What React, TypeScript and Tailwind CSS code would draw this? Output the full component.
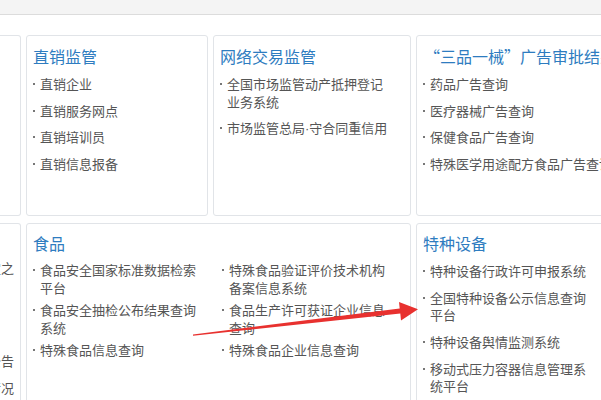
import React from "react";

const Bullet = () => (
    <span className="w-[7px] shrink-0 pt-[8px] flex">
        <span className="block w-[2px] h-[2px] bg-[#777]" />
    </span>
);

const List = ({ items, gap, lh, nowrap }: { items: React.ReactNode[]; gap: string; lh: string; nowrap?: boolean }) => (
    <ul className={`flex flex-col ${gap}`}>
        {items.map((t, i) => (
            <li key={i} className={`flex text-[13px] text-[#555] ${lh}`}>
                <Bullet />
                <span className={nowrap ? "whitespace-nowrap" : "w-[165px]"}>{t}</span>
            </li>
        ))}
    </ul>
);

const Card = ({ title, children, className = "" }: { title?: string; children?: React.ReactNode; className?: string }) => (
    <div className={`bg-white border border-[#e1e4e8] rounded-[3px] pl-[6px] ${className}`}>
        {title && <h3 className="text-[16px] leading-[22px] text-[#2e7cc0] whitespace-nowrap">{title}</h3>}
        {children}
    </div>
);

export default function App() {
    return (
        <div
            className="relative w-[601px] h-[400px] overflow-hidden bg-white"
            style={{ fontFamily: '"Noto Sans CJK SC", "Noto Sans", sans-serif' }}
        >
            {/* top strip */}
            <div className="h-[15px] bg-[#f4f4f4] border-b border-[#dcdcdc]" />

            <div className="mt-[20px] grid grid-cols-[21px_182px_198px_200px] grid-rows-[181px_200px] gap-x-[5px] gap-y-[7px]">
                {/* row 1 */}
                <div className="border-y border-r border-[#e1e4e8] rounded-r-[3px]" />
                <Card title="直销监管" className="pt-[9px]">
                    <div className="mt-[8px]">
                        <List gap="gap-[8.7px]" lh="leading-[18px]" items={["直销企业", "直销服务网点", "直销培训员", "直销信息报备"]} />
                    </div>
                </Card>
                <Card title="网络交易监管" className="pt-[9px]">
                    <div className="mt-[8px]">
                        <List
                            gap="gap-[8px]"
                            lh="leading-[18px]"
                            items={[
                                "全国市场监管动产抵押登记业务系统",
                                <span className="whitespace-nowrap">
                                    市场监管总局<span className="font-['Liberation_Sans']">·</span>守合同重信用
                                </span>,
                            ]}
                        />
                    </div>
                </Card>
                <Card title="“三品一械”广告审批结果查询" className="pt-[9px] pl-[7px] overflow-hidden">
                    <div className="mt-[8px] -ml-[1px]">
                        <List
                            nowrap
                            gap="gap-[8.7px]"
                            lh="leading-[18px]"
                            items={["药品广告查询", "医疗器械广告查询", "保健食品广告查询", "特殊医学用途配方食品广告查询"]}
                        />
                    </div>
                </Card>

                {/* row 2 */}
                <div className="border-y border-r border-[#e1e4e8] rounded-r-[3px] overflow-hidden pr-[6px] text-[13px] text-[#555] leading-[18px] whitespace-nowrap">
                    <div className="mt-[35px] flex justify-end">规定之</div>
                    <div className="mt-[75px] flex justify-end">公告</div>
                    <div className="mt-[9px] flex justify-end">情况</div>
                </div>
                <Card title="食品" className="col-span-2 pt-[8px]">
                    <div className="mt-[7px] grid grid-cols-[189px_1fr]">
                        <List
                            gap="gap-[5px]"
                            lh="leading-[17.5px]"
                            items={["食品安全国家标准数据检索平台", "食品安全抽检公布结果查询系统", "特殊食品信息查询"]}
                        />
                        <List
                            gap="gap-[5px]"
                            lh="leading-[17.5px]"
                            items={["特殊食品验证评价技术机构备案信息系统", "食品生产许可获证企业信息查询", "特殊食品企业信息查询"]}
                        />
                    </div>
                </Card>
                <Card title="特种设备" className="pt-[8px]">
                    <div className="mt-[8px]">
                        <List
                            gap="gap-[10px]"
                            lh="leading-[17px]"
                            items={["特种设备行政许可申报系统", "全国特种设备公示信息查询平台", "特种设备舆情监测系统", "移动式压力容器信息管理系统平台"]}
                        />
                    </div>
                </Card>
            </div>

            {/* red annotation arrow */}
            <svg className="absolute left-0 top-0 pointer-events-none" width="601" height="400" viewBox="0 0 601 400">
                <polygon
                    points="193,334.6 399.7,308.4 399,302 418,309.2 401,320.4 400.3,313.6 193,335.8"
                    fill="#e8312f"
                />
            </svg>
        </div>
    );
}
